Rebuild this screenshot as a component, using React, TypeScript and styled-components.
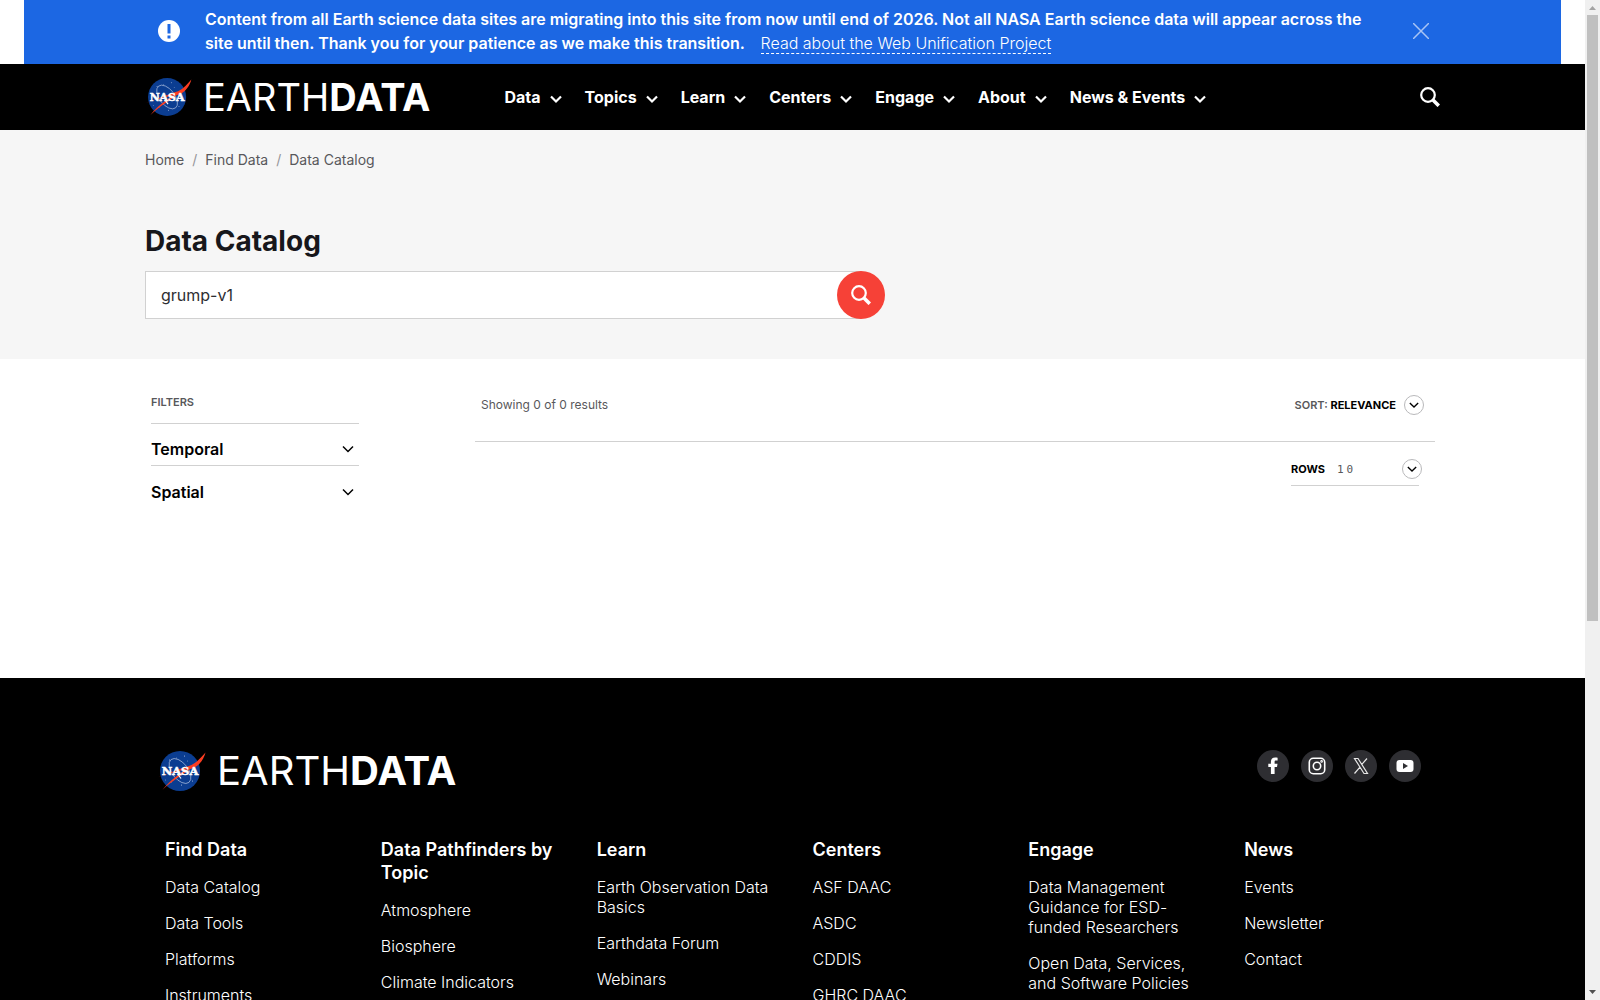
import React, { useState } from 'react';
import styled, { createGlobalStyle } from 'styled-components';

const GlobalStyle = createGlobalStyle`
  * { box-sizing: border-box; }
  body { margin: 0; background: #fff; font-family: Inter, "Liberation Sans", sans-serif; color: #17171b; }
  h1, h2, p, ul, ol { margin: 0; padding: 0; }
  ul, ol { list-style: none; }
  a { color: inherit; text-decoration: none; }
  button { font: inherit; color: inherit; border: 0; background: none; padding: 0; cursor: pointer; }
`;

const Viewport = styled.div`
  display: grid;
  grid-template-columns: minmax(0, 1fr) 15px;
  height: 100vh;
  overflow: hidden;
`;
const Page = styled.div`
  min-width: 0;
  overflow: hidden;
`;
const ScrollTrack = styled.div`
  display: flex;
  flex-direction: column;
  align-items: center;
  background: #f0f0f0;
`;
const ScrollArrow = styled.svg`
  width: 15px;
  height: 15px;
  flex: none;
`;
const ScrollRail = styled.div`
  flex: 1;
  width: 11px;
`;
const ScrollThumb = styled.div`
  height: 62.5%;
  background: #c0c0c0;
`;
const Container = styled.div`
  max-width: 1295px;
  margin: 0 auto;
`;

const Banner = styled.section`
  display: flex;
  align-items: center;
  margin: 0 24px;
  padding: 7px 132px 9px 134px;
  background: #1c67e3;
  color: #fff;
`;
const BannerIcon = styled.svg`
  flex: none;
  width: 22px;
  height: 22px;
  margin-right: 25px;
`;
const BannerText = styled.p`
  flex: 1;
  margin-right: 32px;
  font-size: 16px;
  line-height: 24px;
  font-weight: 600;
`;
const BannerLink = styled.a`
  margin-left: 12px;
  font-weight: 300;
  border-bottom: 1px dashed #fff;
`;
const CloseButton = styled.button`
  display: flex;
  flex: none;
`;

const Header = styled.header`
  background: #000;
  color: #fff;
`;
const HeaderRow = styled(Container)`
  display: flex;
  align-items: center;
  height: 66px;
`;
const LogoLink = styled.a<{ $large?: boolean }>`
  display: flex;
  align-items: center;
  gap: 11px;
  font-size: ${p => (p.$large ? 40 : 38)}px;
  line-height: 40px;
  svg { width: ${p => (p.$large ? 49 : 47)}px; height: ${p => (p.$large ? 42 : 40)}px; }
  strong { font-weight: 700; }
`;
const Nav = styled.nav`
  display: flex;
  flex: 1;
  gap: 23px;
  margin-left: 74px;
`;
const NavButton = styled.button`
  display: flex;
  align-items: center;
  gap: 9px;
  font-size: 16px;
  line-height: 24px;
  font-weight: 700;
  svg { margin-top: 3px; }
`;
const IconButton = styled.button`
  display: flex;
`;

const Hero = styled.section`
  background: #f6f6f6;
  padding: 20px 0 40px;
`;
const Crumbs = styled.ol`
  display: flex;
  gap: 8px;
  font-size: 14px;
  line-height: 20px;
  color: #58585b;
  li { display: flex; gap: 8px; }
  li + li::before { content: "/"; color: #959599; }
`;
const Title = styled.h1`
  margin-top: 53px;
  font-size: 28px;
  line-height: 36px;
  font-weight: 700;
`;
const SearchForm = styled.form`
  display: flex;
  max-width: 740px;
  margin-top: 12px;
`;
const SearchInput = styled.input`
  flex: 1;
  min-width: 0;
  height: 48px;
  padding: 0 15px;
  border: 1px solid #d1d1d1;
  border-right: 0;
  background: #fff;
  color: #2e2e32;
  font: 400 16px/24px Inter, "Liberation Sans", sans-serif;
  outline: 0;
`;
const SearchButton = styled.button`
  display: grid;
  place-items: center;
  width: 48px;
  height: 48px;
  margin-left: -24px;
  border-radius: 50%;
  background: #f64137;
  color: #fff;
`;

const Main = styled(Container)`
  display: grid;
  grid-template-columns: 208px minmax(0, 1fr);
  column-gap: 116px;
  padding: 36px 5px 0 6px;
  min-height: 319px;
  align-items: start;
`;
const FiltersTitle = styled.h2`
  padding-bottom: 14px;
  border-bottom: 1px solid #d1d1d1;
  font-size: 11px;
  line-height: 14px;
  font-weight: 600;
  color: #58585b;
`;
const FilterButton = styled.button`
  display: flex;
  align-items: center;
  justify-content: space-between;
  width: 100%;
  height: 42px;
  padding: 9px 5px 0 0;
  font-size: 16px;
  font-weight: 600;
  color: #000;
  &:not(:last-child) { border-bottom: 1px solid #d1d1d1; }
`;
const ResultsBar = styled.div`
  display: flex;
  align-items: center;
  justify-content: space-between;
  padding: 0 11px 26px 6px;
  border-bottom: 1px solid #d1d1d1;
  font-size: 12px;
  line-height: 20px;
  color: #58585b;
`;
const SortButton = styled.button`
  display: flex;
  align-items: center;
  gap: 8px;
  font-size: 11px;
  font-weight: 600;
  strong { color: #000; font-weight: 700; }
`;
const RowsButton = styled.button`
  display: flex;
  align-items: center;
  width: 128px;
  margin: 17px 16px 0 auto;
  padding-bottom: 6px;
  border-bottom: 1px solid #d1d1d1;
  font-size: 11px;
  font-weight: 700;
  color: #000;
`;
const RowsValue = styled.span`
  flex: 1;
  margin-left: 12px;
  text-align: left;
  font-family: "DejaVu Sans Mono", monospace;
  font-weight: 400;
  letter-spacing: 3px;
  color: #58585b;
`;
const Ring = styled.span<{ $overhang?: boolean }>`
  display: grid;
  place-items: center;
  flex: none;
  width: 20px;
  height: 20px;
  margin-right: ${p => (p.$overhang ? -3 : 0)}px;
  border: 1px solid #b9b9bb;
  border-radius: 50%;
  color: #000;
`;

const Footer = styled.footer`
  background: #000;
  color: #fff;
  padding: 72px 0 64px;
`;
const FooterTop = styled(Container)`
  display: flex;
  justify-content: space-between;
  align-items: flex-start;
  padding: 0 19px 0 12px;
`;
const Social = styled.ul`
  display: flex;
  gap: 12px;
`;
const SocialLink = styled.a`
  display: grid;
  place-items: center;
  width: 32px;
  height: 32px;
  border-radius: 50%;
  background: #2e2e32;
`;
const FooterColumns = styled(Container)`
  display: grid;
  grid-template-columns: repeat(6, minmax(0, 1fr));
  margin-top: 46px;
`;
const FooterColumn = styled.section`
  padding: 0 20px;
  h2 { font-size: 18px; line-height: 23px; font-weight: 600; }
  ul { display: flex; flex-direction: column; gap: 16px; margin-top: 16px; }
  li { font-size: 16px; line-height: 20px; font-weight: 300; }
`;

function NasaMark() {
  return (
    <svg viewBox="0 0 48 42" aria-hidden="true">
      <circle cx="22.500" cy="21" r="20" fill="#0b3d91" />
      <g fill="none" stroke="#aebfe0" strokeWidth="0.700">
        <ellipse cx="22.500" cy="21" rx="8" ry="14.500" transform="rotate(-38 22.500 21)" />
      </g>
      <g fill="#c9d6ee">
        <circle cx="12" cy="10" r="0.500" /><circle cx="27" cy="6" r="0.500" /><circle cx="8" cy="30" r="0.400" />
        <circle cx="35" cy="31" r="0.500" /><circle cx="24" cy="35" r="0.500" /><circle cx="19" cy="8" r="0.400" />
        <circle cx="30" cy="11" r="0.400" /><circle cx="14" cy="32" r="0.400" />
      </g>
      <path d="M0 27.500 C14 22 25 18 34 15 C40 12 44 7 48 2.500 C46.500 9 42 15.500 35 18.500 C26 19.500 13 23 0 27.500Z" fill="#fc3d21" />
      <path d="M5 39.800 C14 28.500 27 19.500 43 12 C28 22.500 15 30.500 5 39.800Z" fill="#fc3d21" />
      <text x="22.500" y="25.200" textAnchor="middle" fontFamily="DejaVu Serif, serif" fontWeight="700" fontSize="11.500" fill="#fff" stroke="#fff" strokeWidth="0.500">NASA</text>
      <path d="M21 25 L23.500 28.500" stroke="#fff" strokeWidth="1.200" />
    </svg>
  );
}

function Logo({ large }: { large?: boolean }) {
  return (
    <LogoLink href="#" $large={large} aria-label="Earthdata home">
      <NasaMark />
      <span>EARTH<strong>DATA</strong></span>
    </LogoLink>
  );
}

function Chevron({ width = 12, stroke = 2 }: { width?: number; stroke?: number }) {
  return (
    <svg width={width} height={width} viewBox="0 0 12 12" fill="none" stroke="currentColor" strokeWidth={stroke} aria-hidden="true">
      <path d="M1 3.500 L6 8.500 L11 3.500" />
    </svg>
  );
}

function SearchIcon() {
  return (
    <svg width="20" height="20" viewBox="0 0 20 20" fill="none" stroke="currentColor" aria-hidden="true">
      <circle cx="8" cy="8" r="6.800" strokeWidth="2.200" />
      <path d="M12.500 12.500 L18.800 18.800" strokeWidth="3.600" />
    </svg>
  );
}

const navItems = ['Data', 'Topics', 'Learn', 'Centers', 'Engage', 'About', 'News & Events'];
const columns = [
  { title: 'Find Data', links: ['Data Catalog', 'Data Tools', 'Platforms', 'Instruments'] },
  { title: 'Data Pathfinders by Topic', links: ['Atmosphere', 'Biosphere', 'Climate Indicators'] },
  { title: 'Learn', links: ['Earth Observation Data Basics', 'Earthdata Forum', 'Webinars'] },
  { title: 'Centers', links: ['ASF DAAC', 'ASDC', 'CDDIS', 'GHRC DAAC'] },
  { title: 'Engage', links: ['Data Management Guidance for ESD-funded Researchers', 'Open Data, Services, and Software Policies'] },
  { title: 'News', links: ['Events', 'Newsletter', 'Contact'] },
];

const socials = [
  { name: 'Facebook', icon: <path d="M11.600 18 V11 H14 L14.500 7.800 H11.600 V6 C11.600 5 12 4.600 13 4.600 H14.600 V1.800 C14 1.700 13 1.600 12.200 1.600 C9.500 1.600 7.900 3.200 7.900 5.700 V7.800 H5.300 V11 H7.900 V18Z" fill="#fff" /> },
  { name: 'Instagram', icon: <g fill="none" stroke="#fff" strokeWidth="1.600"><rect x="2.300" y="2.300" width="15.400" height="15.400" rx="4" /><circle cx="10" cy="10" r="3.700" /><circle cx="14.600" cy="5.400" r="0.500" /></g> },
  { name: 'X', icon: <g fill="none" stroke="#e6e6e6" strokeWidth="1.200"><path d="M3.500 2.500 H7 L16.500 17.500 H13Z M16 2.500 L10.600 8.700 M9.200 10.800 L3.500 17.500" /></g> },
  { name: 'YouTube', icon: <g><rect x="1.500" y="4" width="17" height="12" rx="3" fill="#fff" /><path d="M8 7 L13 10 L8 13Z" fill="#2e2e32" /></g> },
];

export default function App() {
  const [query, setQuery] = useState('grump-v1');
  return (
    <Viewport>
      <GlobalStyle />
      <Page>
        <Banner>
          <BannerIcon viewBox="0 0 22 22" aria-hidden="true">
            <circle cx="11" cy="11" r="11" fill="#fff" />
            <path d="M9.500 4 H12.500 V13.500 H9.500Z M9.500 15.500 H12.500 V18.500 H9.500Z" fill="#1c67e3" />
          </BannerIcon>
          <BannerText>
            Content from all Earth science data sites are migrating into this site from now until end of 2026. Not all NASA Earth science data will appear across the site until then. Thank you for your patience as we make this transition.{' '}
            <BannerLink href="#">Read about the Web Unification Project</BannerLink>
          </BannerText>
          <CloseButton aria-label="Close">
            <svg width="16" height="16" viewBox="0 0 16 16" stroke="#a8c4f4" strokeWidth="1.500"><path d="M0 0 L16 16 M16 0 L0 16" /></svg>
          </CloseButton>
        </Banner>
        <Header>
          <HeaderRow>
            <Logo />
            <Nav>
              {navItems.map(n => <NavButton key={n}>{n}<Chevron stroke={2.2} /></NavButton>)}
            </Nav>
            <IconButton aria-label="Search"><SearchIcon /></IconButton>
          </HeaderRow>
        </Header>
        <Hero>
          <Container>
            <Crumbs>
              <li><a href="#">Home</a></li>
              <li><a href="#">Find Data</a></li>
              <li>Data Catalog</li>
            </Crumbs>
            <Title>Data Catalog</Title>
            <SearchForm onSubmit={e => e.preventDefault()}>
              <SearchInput aria-label="Search the data catalog" value={query} onChange={e => setQuery(e.target.value)} />
              <SearchButton aria-label="Search"><SearchIcon /></SearchButton>
            </SearchForm>
          </Container>
        </Hero>
        <Main as="main">
          <aside>
            <FiltersTitle>FILTERS</FiltersTitle>
            <FilterButton>Temporal<Chevron stroke={1.5} /></FilterButton>
            <FilterButton>Spatial<Chevron stroke={1.5} /></FilterButton>
          </aside>
          <div>
            <ResultsBar>
              <span>Showing 0 of 0 results</span>
              <SortButton><span>SORT: <strong>RELEVANCE</strong></span><Ring><Chevron width={10} stroke={1.6} /></Ring></SortButton>
            </ResultsBar>
            <RowsButton>ROWS<RowsValue>10</RowsValue><Ring $overhang><Chevron width={10} stroke={1.6} /></Ring></RowsButton>
          </div>
        </Main>
        <Footer>
          <FooterTop>
            <Logo large />
            <Social>
              {socials.map(s => (
                <li key={s.name}>
                  <SocialLink href="#" aria-label={s.name}><svg width="20" height="20" viewBox="0 0 20 20" aria-hidden="true">{s.icon}</svg></SocialLink>
                </li>
              ))}
            </Social>
          </FooterTop>
          <FooterColumns>
            {columns.map(c => (
              <FooterColumn key={c.title}>
                <h2>{c.title}</h2>
                <ul>{c.links.map(l => <li key={l}><a href="#">{l}</a></li>)}</ul>
              </FooterColumn>
            ))}
          </FooterColumns>
        </Footer>
      </Page>
      <ScrollTrack aria-hidden="true">
        <ScrollArrow viewBox="0 0 15 15"><path d="M4 10 L7.500 6 L11 10Z" fill="#a3a3a3" /></ScrollArrow>
        <ScrollRail><ScrollThumb /></ScrollRail>
        <ScrollArrow viewBox="0 0 15 15"><path d="M4 5 L7.500 9 L11 5Z" fill="#505050" /></ScrollArrow>
      </ScrollTrack>
    </Viewport>
  );
}
